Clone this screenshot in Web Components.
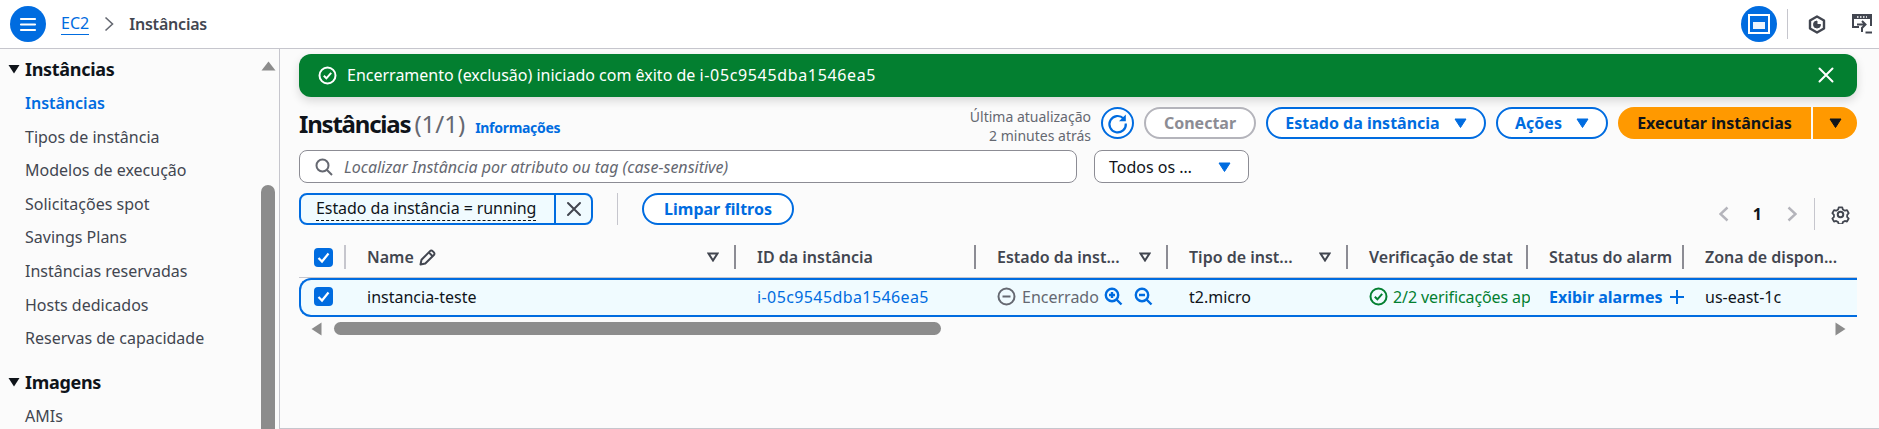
<!DOCTYPE html>
<html lang="pt-BR">
<head>
<meta charset="utf-8">
<title>Instâncias | EC2</title>
<style>
  html, body { margin: 0; height: 429px; overflow: hidden; }
  body { font-family: "Noto Sans", "Open Sans", sans-serif; color: #0f141a; background: #fff; }
  .layout { display: flex; height: 380px; }
  .id { letter-spacing: .65px; }
</style>
</head>
<body>
<top-bar></top-bar>
<div class="layout">
  <side-nav></side-nav>
  <main-panel>
    <flash-bar>Encerramento (exclusão) iniciado com êxito de <span class="id">i-05c9545dba1546ea5</span></flash-bar>
    <page-header></page-header>
    <filter-row></filter-row>
    <token-row></token-row>
    <instance-table></instance-table>
  </main-panel>
</div>
<script>
const tri = (c, w = 13, h = 10) => `<svg width="${w}" height="${h}" viewBox="0 0 13 10"><path d="M1 1h11L6.500 9.500z" fill="${c}" stroke="${c}" stroke-linejoin="round"/></svg>`;
const checkIcon = (c, s = 19) => `<svg style="flex:none" width="${s}" height="${s}" viewBox="0 0 19 19" fill="none" stroke="${c}" stroke-width="2"><circle cx="9.500" cy="9.500" r="8"/><path d="M5.800 9.700l2.600 2.600 4.800-5.400"/></svg>`;

class TopBar extends HTMLElement {
  constructor() {
    super();
    this.attachShadow({ mode: "open" }).innerHTML = `
    <style>
      :host { display: flex; align-items: center; height: 48px; border-bottom: 1px solid #c6c6cd; padding: 0 7px 0 10px; font-size: 16px; background: #fff; }
      .circle { width: 36px; height: 36px; border-radius: 50%; background: #006ce0; display: flex; align-items: center; justify-content: center; flex: none; }
      a { color: #006ce0; margin-left: 15px; text-decoration: none; border-bottom: 1px solid #006ce0; line-height: 21px; }
      .chev { margin: 0 15px 0 15px; }
      b { color: #424650; font-weight: 600; letter-spacing: -.2px; }
      .right { margin-left: auto; display: flex; align-items: center; }
      .sep { width: 1px; height: 30px; background: #c6c6cd; margin: 0 20px 0 10px; }
    </style>
    <div class="circle"><svg width="20" height="17" viewBox="0 0 20 17" stroke="#fff" stroke-width="2.200" stroke-linecap="round"><path d="M3 3h14M3 8.500h14M3 14h14"/></svg></div>
    <a>EC2</a>
    <svg class="chev" width="10" height="16" viewBox="0 0 10 16" fill="none" stroke="#656871" stroke-width="1.600"><path d="M1.500 1.500L8.500 8l-7 6.500"/></svg>
    <b>Instâncias</b>
    <div class="right">
      <div class="circle"><svg width="22" height="20" viewBox="0 0 22 20" fill="none"><rect x="1" y="1" width="20" height="18" stroke="#fff" stroke-width="2"/><rect x="5" y="8" width="12" height="7" fill="#eef5fd"/></svg></div>
      <div class="sep"></div>
      <svg width="18" height="19" viewBox="0 0 18 19" fill="none" stroke="#424650" stroke-width="2.400"><path d="M9 1.500l7 4v8l-7 4-7-4v-8z" stroke-linejoin="round"/><path d="M9 6a3.500 3.500 0 1 0 3.500 3.500L9 9.500z" fill="#424650" stroke-width="1"/></svg>
      <svg style="margin-left:26px" width="20" height="20" viewBox="0 0 20 20" fill="none" stroke="#424650" stroke-width="2"><path d="M7 13H1V1h18v11"/><rect x="1" y="1" width="18" height="4" fill="#424650" stroke="none"/><path d="M5 3h10" stroke="#fff" stroke-width="1.500" stroke-dasharray="1.500 1.500"/><path d="M5 10.500h8M10 7l3.500 3.500L10 14v4"/><path d="M13.500 18.500H20"/></svg>
    </div>`;
  }
}

class SideNav extends HTMLElement {
  constructor() {
    super();
    const links = ["Tipos de instância", "Modelos de execução", "Solicitações spot", "Savings Plans", "Instâncias reservadas", "Hosts dedicados", "Reservas de capacidade"];
    this.attachShadow({ mode: "open" }).innerHTML = `
    <style>
      :host { display: flex; width: 280px; box-sizing: border-box; flex: none; border-right: 1px solid #c6c6cd; background: #fbfbfb; overflow: hidden; height: 380px; }
      nav { width: 261px; padding-top: 3px; flex: none; font-size: 16px; color: #424650; }
      .head { display: flex; align-items: center; height: 34px; padding-bottom: 1px; font-size: 18px; font-weight: 700; color: #0f141a; letter-spacing: -.3px; }
      .head svg { width: 25px; padding-left: 3px; box-sizing: border-box; }
      .item { height: 33.600px; line-height: 33.600px; padding-left: 25px; }
      .on { color: #006ce0; font-weight: 600; }
      .gap { height: 9px; }
      .bar { width: 14px; display: flex; flex-direction: column; align-items: center; padding-top: 12px; }
      .thumb { width: 14px; flex: 1; margin-top: 114px; background: #8c8c8c; border-radius: 7px 7px 0 0; }
    </style>
    <nav>
      <div class="head"><svg height="10" viewBox="0 0 13 10"><path d="M1 1h11L6.500 9.500z" fill="#0f141a"/></svg>Instâncias</div>
      <div class="item on">Instâncias</div>
      ${links.map(l => `<div class="item">${l}</div>`).join("")}
      <div class="gap"></div>
      <div class="head"><svg height="10" viewBox="0 0 13 10"><path d="M1 1h11L6.500 9.500z" fill="#0f141a"/></svg>Imagens</div>
      <div class="item">AMIs</div>
    </nav>
    <div class="bar">
      <svg width="15" height="10" viewBox="0 0 15 10"><path d="M7.500 .5L14.500 9.500H.5z" fill="#8c8c8c"/></svg>
      <div class="thumb"></div>
    </div>`;
  }
}

class MainPanel extends HTMLElement {
  constructor() {
    super();
    this.attachShadow({ mode: "open" }).innerHTML = `
    <style>
      :host { display: block; flex: 1; min-width: 0; padding: 5px 22px 0 19px; background: #fbfbfb; border-bottom: 1px solid #c6c6cd; box-sizing: border-box; height: 380px; font-size: 16px; }
    </style>
    <slot></slot>`;
  }
}

class FlashBar extends HTMLElement {
  constructor() {
    super();
    this.attachShadow({ mode: "open" }).innerHTML = `
    <style>
      :host { display: flex; align-items: center; height: 43px; box-sizing: border-box; border-radius: 12px; background: #037f30; color: #fff; padding: 0 23px 1px 19px; box-shadow: 0 4px 10px rgba(0,0,0,.14); font-size: 16px; }
      span { margin-left: 10px; flex: 1; }
    </style>
    ${checkIcon("#fff")}<span><slot></slot></span>
    <svg width="16" height="16" viewBox="0 0 16 16" stroke="#fff" stroke-width="2" stroke-linecap="round"><path d="M1.500 1.500l13 13M14.500 1.500l-13 13"/></svg>`;
  }
}

class PageHeader extends HTMLElement {
  constructor() {
    super();
    const pill = "height:32px;box-sizing:border-box;border-radius:16px;display:flex;align-items:center;justify-content:center;font-weight:700;flex:none;";
    this.attachShadow({ mode: "open" }).innerHTML = `
    <style>
      :host { display: flex; align-items: flex-start; margin-top: 10px; height: 43px; }
      .title { display: flex; align-items: baseline; }
      h1 { font-size: 24px; font-weight: 700; margin: 0; color: #0f141a; line-height: 32px; letter-spacing: -1.200px; }
      .count { font-size: 24px; color: #656871; margin-left: 4px; }
      .info { font-size: 14px; font-weight: 700; color: #006ce0; margin-left: 10px; letter-spacing: -.3px; }
      .right { margin-left: auto; display: flex; align-items: flex-start; gap: 10px; }
      .upd { text-align: right; font-size: 14px; line-height: 19px; color: #656871; }
      .blue { border: 2px solid #006ce0; color: #006ce0; background: #fff; gap: 14px; }
    </style>
    <div class="title"><h1>Instâncias</h1><span class="count">(1/1)</span><span class="info">Informações</span></div>
    <div class="right">
      <div class="upd">Última atualização<br>2 minutes atrás</div>
      <div class="blue" style="${pill}width:33px;border-radius:50%;gap:0"><svg width="23" height="23" viewBox="0 0 23 23" fill="none" stroke="#006ce0" stroke-width="2.200"><path d="M17.500 6.500A8.200 8.200 0 1 0 19.800 11.500"/><path d="M19.800 2.500v6.800H13z" fill="#006ce0" stroke="none"/></svg></div>
      <div style="${pill}width:112px;border:2px solid #b4b4bb;color:#8c8c94;background:#fff">Conectar</div>
      <div class="blue" style="${pill}width:220px">Estado da instância ${tri("#006ce0")}</div>
      <div class="blue" style="${pill}width:112px">Ações ${tri("#006ce0")}</div>
      <div style="display:flex;gap:2px;flex:none">
        <div style="${pill}width:193px;background:#ff9900;border-radius:16px 0 0 16px">Executar instâncias</div>
        <div style="${pill}width:44px;background:#ff9900;border-radius:0 16px 16px 0">${tri("#0f141a")}</div>
      </div>
    </div>`;
  }
}

class FilterRow extends HTMLElement {
  constructor() {
    super();
    this.attachShadow({ mode: "open" }).innerHTML = `
    <style>
      :host { display: flex; gap: 17px; height: 33px; font-size: 16px; }
      .box { height: 33px; box-sizing: border-box; border: 1px solid #8c8c94; border-radius: 8px; background: #fff; display: flex; align-items: center; }
      .search { width: 778px; padding-left: 15px; gap: 11px; color: #656871; font-style: italic; }
      .sel { width: 155px; padding: 0 17px 0 14px; justify-content: space-between; color: #0f141a; }
    </style>
    <div class="box search"><svg width="18" height="18" viewBox="0 0 18 18" fill="none" stroke="#656871" stroke-width="2"><circle cx="7.500" cy="7.500" r="6"/><path d="M12 12l5 5"/></svg><span>Localizar Instância por atributo ou tag (case-sensitive)</span></div>
    <div class="box sel"><span>Todos os …</span>${tri("#006ce0")}</div>`;
  }
}

class TokenRow extends HTMLElement {
  constructor() {
    super();
    this.attachShadow({ mode: "open" }).innerHTML = `
    <style>
      :host { display: flex; align-items: flex-start; margin-top: 10px; height: 53px; font-size: 16px; }
      .token { display: flex; width: 294px; height: 32px; box-sizing: border-box; border: 2px solid #006ce0; border-radius: 8px; background: #f0fbff; }
      .token span { flex: 1; padding-left: 15px; line-height: 26px; letter-spacing: -.08px; }
      .token u { text-decoration: none; border-bottom: 1px dashed #0f141a; display: inline-block; line-height: 23px; }
      .x { width: 35px; border-left: 2px solid #006ce0; display: flex; align-items: center; justify-content: center; }
      .v { width: 1px; height: 32px; background: #c6c6cd; margin: 0 24px; }
      .clear { width: 152px; height: 32px; box-sizing: border-box; border: 2px solid #006ce0; border-radius: 16px; color: #006ce0; font-weight: 700; background: #fff; display: flex; align-items: center; justify-content: center; }
      .pager { margin-left: auto; display: flex; align-items: center; height: 32px; margin-top: 5px; font-weight: 700; }
      .pager i { width: 1px; height: 32px; background: #c6c6cd; margin: 0 16px 0 17px; }
    </style>
    <div class="token"><span><u>Estado da instância = running</u></span><div class="x"><svg width="16" height="16" viewBox="0 0 16 16" stroke="#424650" stroke-width="2" stroke-linecap="round"><path d="M2 2l12 12M14 2L2 14"/></svg></div></div>
    <div class="v"></div>
    <div class="clear">Limpar filtros</div>
    <div class="pager">
      <svg width="10" height="16" viewBox="0 0 10 16" fill="none" stroke="#b4b4bb" stroke-width="2.400"><path d="M8.500 1.500L1.500 8l7 6.500"/></svg>
      <span style="margin:0 25px 0 24px">1</span>
      <svg width="10" height="16" viewBox="0 0 10 16" fill="none" stroke="#b4b4bb" stroke-width="2.400"><path d="M1.500 1.500L8.500 8l-7 6.500"/></svg>
      <i></i>
      <svg width="19" height="19" viewBox="0 0 24 24" fill="none" stroke="#424650" stroke-width="2.500" stroke-linejoin="round"><circle cx="12" cy="12" r="3.500"/><path d="M9.500 2h5l.8 3 2.900 1.700 3-.8 2.300 4.300-2.100 2.300v2.900l-.1.100 2.200 2.200-2.400 4.200-3-.8-2.800 1.600-.8 3h-5l-.8-3-2.800-1.600-3 .8L.6 17.700l2.200-2.200v-3L.6 10.200l2.300-4.300 3 .8L8.700 5z" transform="translate(1.200 1.200) scale(.9)"/></svg>
      <span style="width:7px"></span>
    </div>`;
  }
}

class InstanceTable extends HTMLElement {
  constructor() {
    super();
    const box = `<svg width="19" height="19" viewBox="0 0 19 19"><rect width="19" height="19" rx="4" fill="#006ce0"/><path d="M4.500 10l3.500 3.500 6.500-8" fill="none" stroke="#fff" stroke-width="2.200"/></svg>`;
    const sort = `<svg class="sort" width="12" height="10" viewBox="0 0 12 10"><path d="M1.500 1.500h9L6 8.500z" fill="none" stroke="#424650" stroke-width="2"/></svg>`;
    const zoom = d => `<svg width="19" height="19" viewBox="0 0 19 19" fill="none" stroke="#006ce0" stroke-width="2.400"><circle cx="8" cy="8" r="6.200"/><path d="M12.500 12.500l5 5M5 8h6${d}"/></svg>`;
    this.attachShadow({ mode: "open" }).innerHTML = `
    <style>
      :host { display: block; font-size: 16px; }
      .grid { display: grid; grid-template-columns: 47px 390px 240px 192px 180px 180px 156px 173px; }
      .head { height: 32px; align-items: stretch; font-weight: 600; color: #424650; border-bottom: 1px solid #c6c6cd; margin-top: -1px; }
      .th { display: flex; align-items: center; padding: 0 12px 0 21px; height: 24px; white-space: nowrap; border-right: 2px solid #8c8c94; box-sizing: border-box; min-width: 0; }
      .th:last-child { border-right: 0; }
      .th.cb { border-right-color: #c6c6cd; padding: 0 0 0 15px; }
      .th .sort { margin-left: auto; flex: none; margin-right: 3px; }
      .tight { padding-right: 4px !important; }
      .row { height: 39px; box-sizing: border-box; border: 2px solid #006ce0; border-right: 0; border-radius: 12px 0 0 12px; background: #f0fbff; align-items: center; color: #0f141a; padding-bottom: 2px; }
      .td { padding: 0 0 0 19px; white-space: nowrap; overflow: hidden; display: flex; align-items: center; min-width: 0; }
      .td.cb { padding-left: 13px; }
      .blue { color: #006ce0; }
      .gray { color: #656871; }
      .green { color: #037f30; }
      .scroll { display: flex; align-items: center; height: 13px; margin-top: 5px; padding: 0 11px 0 12px; }
      .thumb { width: 607px; height: 13px; border-radius: 7px; background: #8c8c8c; margin-left: 12px; }
    </style>
    <div class="grid head">
      <div class="th cb">${box}</div>
      <div class="th"><span>Name</span><svg style="margin-left:5px" width="17" height="17" viewBox="0 0 17 17" fill="none" stroke="#424650" stroke-width="2" stroke-linejoin="round"><path d="M1.500 15.500l1-4.700L11 2.100a1.800 1.800 0 0 1 2.600 0l1.300 1.300a1.800 1.800 0 0 1 0 2.600l-8.600 8.500z"/><path d="M9.800 3.400l3.800 3.800"/></svg>${sort}</div>
      <div class="th"><span>ID da instância</span></div>
      <div class="th"><span>Estado da inst...</span>${sort}</div>
      <div class="th"><span>Tipo de inst...</span>${sort}</div>
      <div class="th tight"><span>Verificação de stat</span></div>
      <div class="th tight"><span>Status do alarm</span></div>
      <div class="th"><span>Zona de dispon...</span></div>
    </div>
    <div class="grid row">
      <div class="td cb">${box}</div>
      <div class="td">instancia-teste</div>
      <div class="td blue"><span style="letter-spacing:.4px">i-05c9545dba1546ea5</span></div>
      <div class="td gray"><svg style="margin-right:6px;flex:none" width="19" height="19" viewBox="0 0 19 19" fill="none" stroke="#656871" stroke-width="2"><circle cx="9.500" cy="9.500" r="8"/><path d="M5.500 9.500h8"/></svg>Encerrado<span style="display:flex;gap:11px;margin-left:5px">${zoom("M8 5v6")}${zoom("")}</span></div>
      <div class="td">t2.micro</div>
      <div class="td green">${checkIcon("#037f30")}<span style="margin-left:5px;letter-spacing:-.1px">2/2 verificações ap</span></div>
      <div class="td blue" style="font-weight:700">Exibir alarmes<svg style="margin-left:7px;flex:none" width="16" height="16" viewBox="0 0 16 16" stroke="#006ce0" stroke-width="2"><path d="M8 1v14M1 8h14"/></svg></div>
      <div class="td">us-east-1c</div>
    </div>
    <div class="scroll">
      <svg width="11" height="14" viewBox="0 0 11 14"><path d="M10.500 .500v13L.5 7z" fill="#8c8c8c"/></svg>
      <div class="thumb"></div>
      <svg style="margin-left:auto" width="11" height="14" viewBox="0 0 11 14"><path d="M.5 .500v13L10.500 7z" fill="#8c8c8c"/></svg>
    </div>`;
  }
}

customElements.define("top-bar", TopBar);
customElements.define("side-nav", SideNav);
customElements.define("main-panel", MainPanel);
customElements.define("flash-bar", FlashBar);
customElements.define("page-header", PageHeader);
customElements.define("filter-row", FilterRow);
customElements.define("token-row", TokenRow);
customElements.define("instance-table", InstanceTable);
</script>
</body>
</html>
